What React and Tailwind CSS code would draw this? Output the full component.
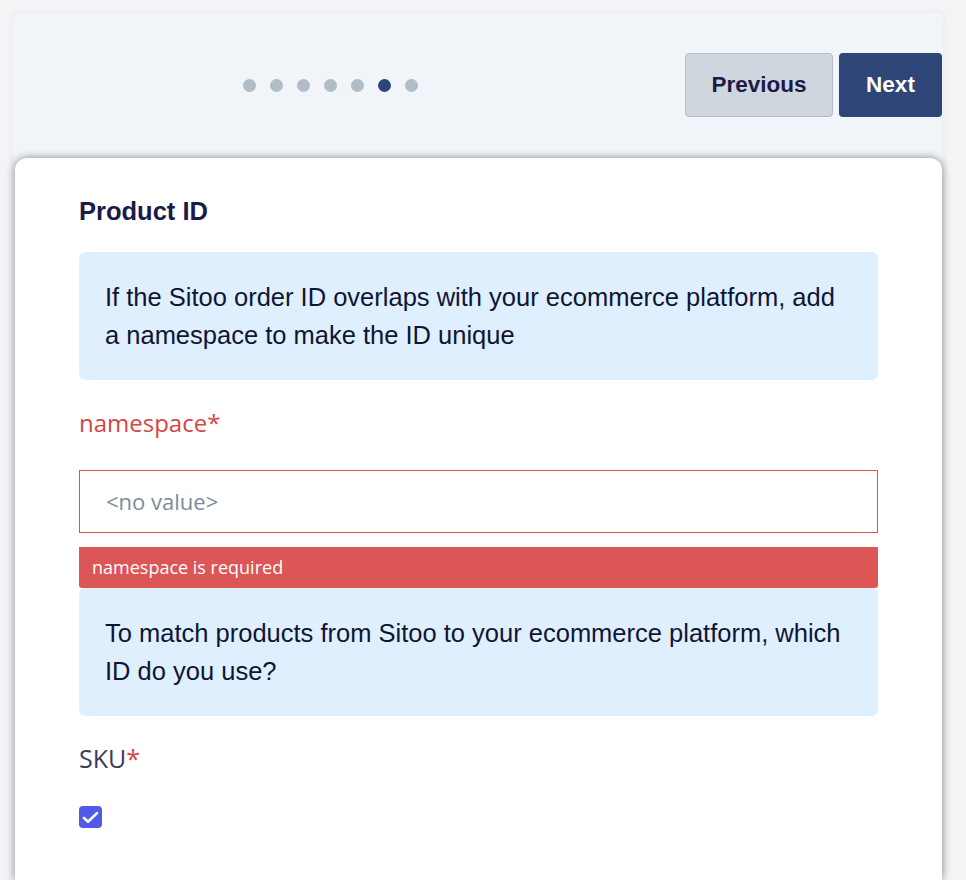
export default function App() {
  const dots = [0, 1, 2, 3, 4, 5, 6];
  const active = 5;

  return (
    <div className="min-h-[880px] bg-[#f4f4f6] pt-[13px] pl-[13px] pr-[23px] font-['Liberation_Sans',Arial,sans-serif]">
      <div className="rounded-t-[6px] bg-[#f1f5f9] shadow-[0_0_6px_rgba(0,0,0,0.06)]">
        <div className="flex h-[145px] items-start pt-[40px] pr-px">
          <div className="flex flex-1 justify-center pt-[26px] pr-[38px]">
            <div className="flex gap-[14px]">
              {dots.map((d) => (
                <span
                  key={d}
                  className={
                    d === active
                      ? 'h-[13px] w-[13px] rounded-full bg-[#2e4577]'
                      : 'h-[13px] w-[13px] rounded-full bg-[#b0bcc8]'
                  }
                />
              ))}
            </div>
          </div>
          <div className="flex gap-[6px]">
            <button className="h-[64px] w-[148px] rounded-[4px] border border-[#b3bdc9] bg-[#cfd6de] text-[22.5px] font-bold text-[#1b1a48]">
              Previous
            </button>
            <button className="h-[64px] w-[103px] rounded-[4px] bg-[#2e4577] text-[22.5px] font-bold text-white">
              Next
            </button>
          </div>
        </div>

        <div className="ml-[2px] mr-px min-h-[722px] rounded-t-[12px] bg-white px-[64px] pt-[38px] shadow-[0_0_8px_rgba(0,0,0,0.45)]">
          <h2 className="text-[25.5px] font-bold leading-[30px] text-[#1b1a48]">Product ID</h2>

          <div className="mt-[26px] rounded-[6px] bg-[#e0effd] px-[26px] pt-[26px] pb-[26px] text-[25.5px] leading-[38px] text-[#0f1537]">
            If the Sitoo order ID overlaps with your ecommerce platform, add
            <br />a namespace to make the ID unique
          </div>

          <div className="mt-[29px] font-['Open_Sans','Noto_Sans',sans-serif] text-[24px] font-medium leading-[28px] text-[#d64545]">
            namespace*
          </div>

          <div className="mt-[33px] flex h-[63px] items-center border border-solid border-[#d9534f] px-[26px] font-['Open_Sans','Noto_Sans',sans-serif] text-[22px] text-[#7a8ba0]">
            &lt;no value&gt;
          </div>

          <div className="mt-[14px] flex h-[41px] items-center rounded-b-[3px] bg-[#dd5656] px-[13px] font-['Open_Sans','Noto_Sans',sans-serif] text-[18px] text-white">
            namespace is required
          </div>

          <div className="rounded-[6px] bg-[#e0effd] px-[26px] pt-[26px] pb-[26px] text-[25.5px] leading-[38px] text-[#0f1537]">
            To match products from Sitoo to your ecommerce platform, which
            <br />
            ID do you use?
          </div>

          <div className="mt-[27px] font-['Open_Sans','Noto_Sans',sans-serif] text-[25px] font-medium leading-[30px] text-[#3a3d5c]">
            SKU<span className="text-[#d64545]">*</span>
          </div>

          <div className="mt-[33px] flex h-[22px] w-[23px] items-center justify-center rounded-[4px] bg-[#4f5be8]">
            <svg width="19" height="19" viewBox="0 0 16 16" fill="none">
              <path d="M2.5 8.3l3.4 3.3L13.5 4.3" stroke="white" strokeWidth="2.2" strokeLinecap="round" strokeLinejoin="round" />
            </svg>
          </div>
        </div>
      </div>
    </div>
  );
}
